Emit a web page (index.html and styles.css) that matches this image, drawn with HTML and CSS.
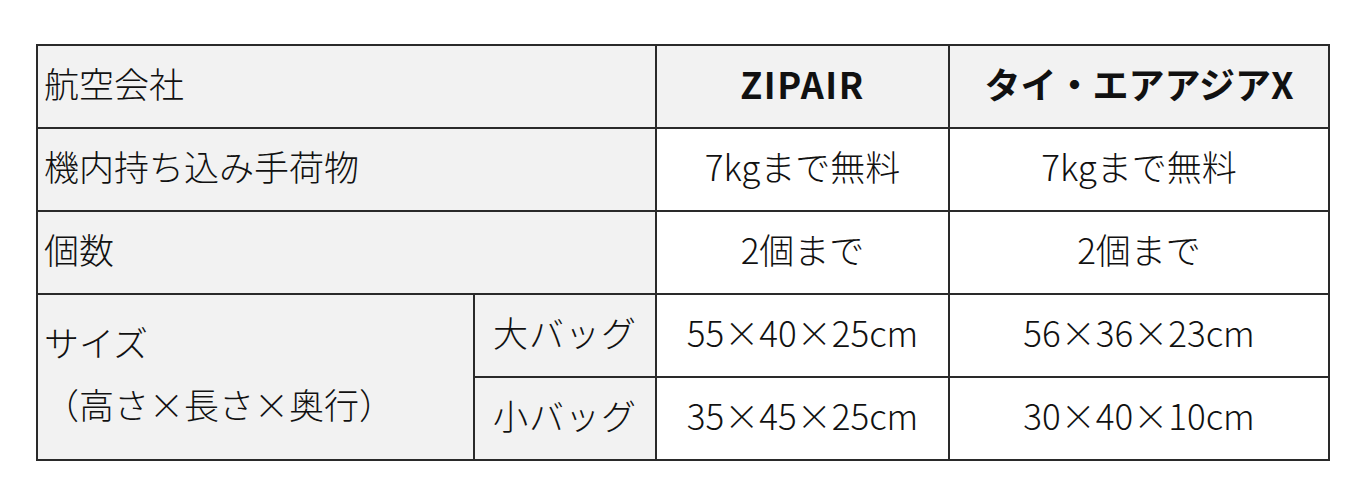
FILE: index.html
```html
<!DOCTYPE html>
<html lang="ja">
<head>
<meta charset="utf-8">
<link rel="stylesheet" href="styles.css">
</head>
<body>
<table class="baggage">
  <colgroup>
    <col class="c1"><col class="c2"><col class="c3"><col class="c4">
  </colgroup>
  <tr>
    <td class="label" colspan="2">航空会社</td>
    <td class="head zip">ZIPAIR</td>
    <td class="head">タイ・エアアジアX</td>
  </tr>
  <tr>
    <td class="label" colspan="2">機内持ち込み手荷物</td>
    <td class="val">7kgまで無料</td>
    <td class="val">7kgまで無料</td>
  </tr>
  <tr>
    <td class="label" colspan="2">個数</td>
    <td class="val">2個まで</td>
    <td class="val">2個まで</td>
  </tr>
  <tr>
    <td class="label size" rowspan="2"><span class="l1">サイズ</span><br><span class="l2">（高さ×長さ×奥行）</span></td>
    <td class="label sub">大バッグ</td>
    <td class="val">55×40×25cm</td>
    <td class="val">56×36×23cm</td>
  </tr>
  <tr>
    <td class="label sub">小バッグ</td>
    <td class="val">35×45×25cm</td>
    <td class="val">30×40×10cm</td>
  </tr>
</table>
</body>
</html>
```

FILE: styles.css
```css
html, body {
  margin: 0;
  padding: 0;
  background: #ffffff;
}
body {
  padding: 44px 0 0 36px;
  font-family: "Noto Sans CJK JP", "Noto Sans", sans-serif;
  font-weight: 300;
  color: #111;
}
.baggage {
  border-collapse: collapse;
  table-layout: fixed;
  width: 1292px;
  font-size: 35px;
}
.c1 { width: 437px; }
.c2 { width: 182px; }
.c3 { width: 293px; }
.c4 { width: 380px; }
.baggage td {
  border: 2px solid #2a2a2a;
  height: 73px;
  padding: 0 0 8px 0;
  line-height: 42px;
  white-space: nowrap;
}
.label {
  background: #f2f2f2;
  text-align: left;
  padding-left: 6px !important;
}
.head {
  background: #f2f2f2;
  text-align: center;
  font-weight: 700;
  font-size: 36px;
}
.zip {
  letter-spacing: 1.5px;
}
.val {
  text-align: center;
  background: #ffffff;
}
.sub {
  text-align: center;
  padding-left: 0 !important;
  letter-spacing: 1px;
}
.size {
  line-height: 62px !important;
}
```
